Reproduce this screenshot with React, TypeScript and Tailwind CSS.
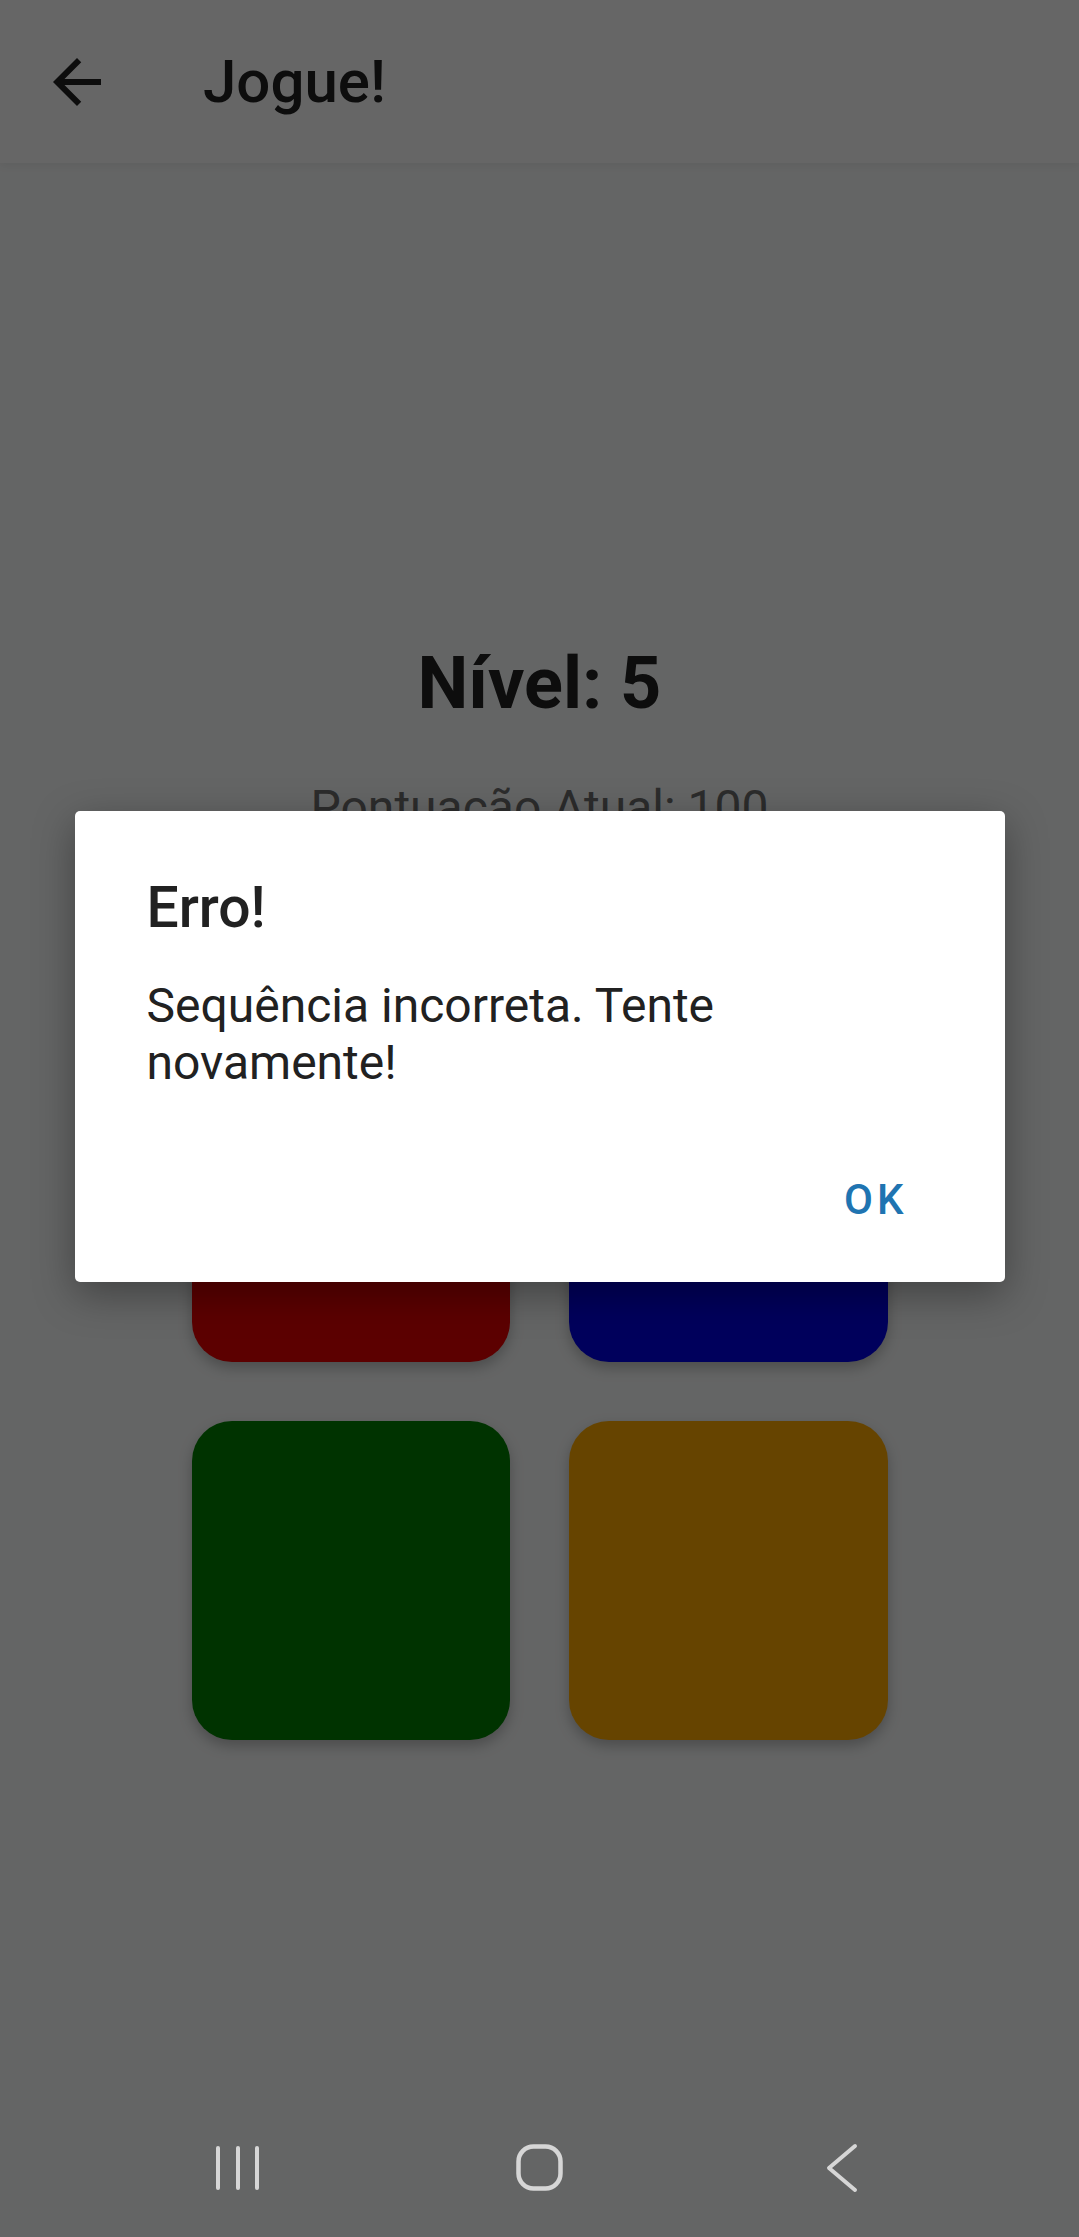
import React from "react";

const tiles = [
  { name: "vermelho", color: "bg-[#e60000]" },
  { name: "azul", color: "bg-[#0000e6]" },
  { name: "verde", color: "bg-[#008000]" },
  { name: "laranja", color: "bg-[#ffaa00]" },
];

function ArrowBack() {
  return (
    <svg viewBox="0 0 24 24" className="w-[72px] h-[72px]" fill="#212121">
      <path d="M20 11H7.83l5.59-5.59L12 4l-8 8 8 8 1.41-1.41L7.83 13H20v-2z" />
    </svg>
  );
}

function NavBar() {
  return (
    <div className="h-[144px] bg-[#646565] flex items-center justify-center gap-[242px]">
      {/* Recentes */}
      <svg viewBox="0 0 60 60" className="w-[60px] h-[60px]" stroke="#d6d6d6" strokeWidth={4} strokeLinecap="round">
        <line x1="10" y1="13" x2="10" y2="53" />
        <line x1="30" y1="13" x2="30" y2="53" />
        <line x1="49" y1="13" x2="49" y2="53" />
      </svg>
      {/* Início */}
      <svg viewBox="0 0 60 60" className="w-[60px] h-[60px]" fill="none" stroke="#d6d6d6" strokeWidth={4.5}>
        <rect x="8.5" y="11.5" width="42" height="42" rx="15" />
      </svg>
      {/* Voltar */}
      <svg viewBox="0 0 60 60" className="w-[60px] h-[60px]" fill="none" stroke="#d6d6d6" strokeWidth={4} strokeLinecap="round" strokeLinejoin="round">
        <polyline points="43,11 17,33 43,55" />
      </svg>
    </div>
  );
}

export default function App() {
  return (
    <div className="w-[1079px] h-[2237px] flex flex-col overflow-hidden font-['Roboto',sans-serif]">
      <div className="relative flex-1 flex flex-col bg-[#fafcfc]">
        {/* Toolbar */}
        <header className="relative z-10 h-[163px] bg-white flex items-center shadow-[0_3px_8px_rgba(0,0,0,0.06)]">
          <div className="ml-[41px]">
            <ArrowBack />
          </div>
          <h1 className="ml-[90px] text-[60px] leading-[60px] font-medium text-[#212121]">Jogue!</h1>
        </header>

        {/* Jogo */}
        <main className="flex flex-col items-center pt-[485px]">
          <h2 className="text-[72px] leading-[72px] font-bold text-[#222222]">Nível: 5</h2>
          <p className="mt-[64px] text-[48px] leading-[48px] text-[#6e6e6e]">Pontuação Atual: 100</p>

          <div className="mt-[211px] grid grid-cols-2 gap-[59px] w-[696px]">
            {tiles.map((t) => (
              <div
                key={t.name}
                className={`h-[319px] rounded-[40px] ${t.color} shadow-[0_6px_14px_rgba(0,0,0,0.25)]`}
              />
            ))}
          </div>
        </main>

        {/* Alerta */}
        <div className="absolute inset-0 z-20 bg-black/60 flex items-center justify-center">
          <div className="w-[930px] bg-white rounded-[5px] shadow-[0_12px_40px_rgba(0,0,0,0.35)] pt-[68px] pb-[61px]">
            <h3 className="px-[72px] text-[57px] leading-[57px] font-medium text-[#212121]">Erro!</h3>
            <p className="mt-[41px] px-[72px] text-[48px] leading-[57px] text-[#212121]">
              Sequência incorreta. Tente novamente!
            </p>
            <div className="mt-[88px] flex justify-end pr-[97px]">
              <button className="text-[42px] leading-[42px] font-medium tracking-[4px] text-[#1f74b1]">OK</button>
            </div>
          </div>
        </div>
      </div>

      <NavBar />
    </div>
  );
}
